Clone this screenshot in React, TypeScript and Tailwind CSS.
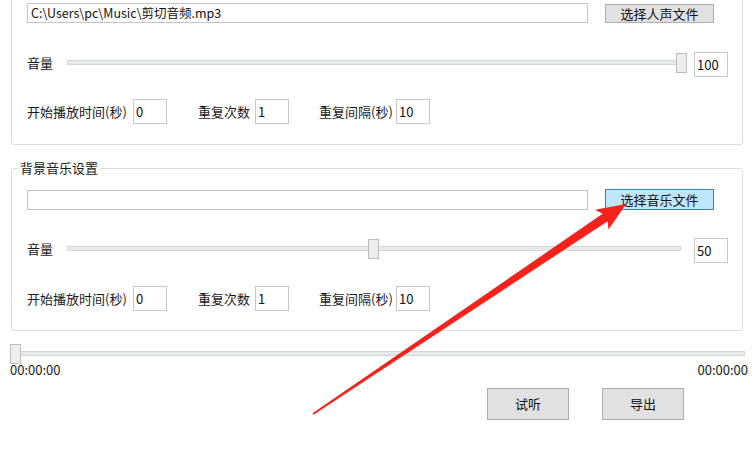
const font = "font-['Noto_Sans_CJK_SC','Noto_Sans',sans-serif]";

const Slider = ({ width, trackRight, thumb }: { width: number; trackRight: number; thumb: number }) => (
  <div className="relative h-[20px]" style={{ width }}>
    <div
      className="absolute top-[7px] left-0 h-[5px] bg-[#e7eaea] border border-[#d6d6d6]"
      style={{ right: trackRight }}
    />
    <div
      className="absolute top-0 w-[11px] h-[20px] bg-[#ededed] border border-[#bcbcbc]"
      style={{ left: thumb }}
    />
  </div>
);

const NumBox = ({ value }: { value: string }) => (
  <div className="w-[34px] h-[25px] border border-[#c8c8c8] bg-white flex items-center pl-[2px] text-[13px] text-[#111]">
    {value}
  </div>
);

const Params = () => (
  <div className="flex items-center h-[25px] pl-[15px] text-[13px] text-[#1a1a1a]">
    <span className="w-[106px] whitespace-nowrap">开始播放时间(秒)</span>
    <NumBox value="0" />
    <span className="ml-[31px] w-[57px] whitespace-nowrap">重复次数</span>
    <NumBox value="1" />
    <span className="ml-[30px] w-[77px] whitespace-nowrap">重复间隔(秒)</span>
    <NumBox value="10" />
  </div>
);

const Group = ({
  title,
  path,
  button,
  active,
  volume,
  thumb,
  className,
}: {
  title?: string;
  path: string;
  button: string;
  active?: boolean;
  volume: string;
  thumb: number;
  className: string;
}) => (
  <div className={`relative mx-[11px] border border-[#dcdcdc] rounded-[3px] ${className}`}>
    {title && (
      <span className="absolute -top-[10px] left-[6px] bg-white px-[2px] text-[13px] leading-[17px] text-[#1a1a1a]">
        {title}
      </span>
    )}
    <div className="flex items-end pl-[15px]">
      <div className="w-[561px] h-[20px] border border-[#c5c5c5] bg-white flex items-center pl-[3px] text-[12.5px] text-[#111] whitespace-nowrap">
        {path}
      </div>
      <button
        className={`ml-[17px] w-[109px] flex items-center justify-center text-[13px] text-[#111] border ${
          active ? "h-[21px] bg-[#bee6fd] border-[#3c7fb1]" : "h-[19px] bg-[#e1e1e1] border-[#adadad]"
        }`}
      >
        {button}
      </button>
    </div>
    <div className={`flex items-start h-[25px] pl-[15px] ${active ? "mt-[28px]" : "mt-[29px]"}`}>
      <span className="w-[40px] mt-[1px] leading-[20px] text-[13px] text-[#1a1a1a]">音量</span>
      <div className="mt-[1px]">
        <Slider width={620} trackRight={6} thumb={thumb} />
      </div>
      <div className="ml-[7px]">
        <NumBox value={volume} />
      </div>
    </div>
    <div className={active ? "mt-[23px]" : "mt-[22px]"}>
      <Params />
    </div>
  </div>
);

export default function App() {
  return (
    <div className={`relative w-[754px] h-[449px] overflow-hidden bg-white ${font}`}>
      <Group
        className="mt-[-24px] pt-[26px] pb-[20px]"
        path="C:\Users\pc\Music\剪切音频.mp3"
        button="选择人声文件"
        volume="100"
        thumb={609}
      />
      <Group
        className="mt-[23px] pt-[20px] pb-[19px]"
        title="背景音乐设置"
        path=""
        button="选择音乐文件"
        active
        volume="50"
        thumb={301}
      />
      <div className="mt-[13px] pl-[10px]">
        <Slider width={735} trackRight={0} thumb={0} />
      </div>
      <div className="flex justify-between pl-[10px] pr-[6px] -mt-[3px] text-[13px] leading-[17px] text-[#1a1a1a]">
        <span>00:00:00</span>
        <span>00:00:00</span>
      </div>
      <div className="flex gap-[33px] pl-[487px] mt-[10px]">
        <button className="w-[82px] h-[32px] bg-[#e1e1e1] border border-[#adadad] text-[13px] text-[#111]">试听</button>
        <button className="w-[82px] h-[32px] bg-[#e1e1e1] border border-[#adadad] text-[13px] text-[#111]">导出</button>
      </div>
      <svg className="absolute inset-0 pointer-events-none" width="754" height="449" viewBox="0 0 754 449">
        <polygon
          points="312.5,413.2 602.6,213.8 595.1,209.8 626,204 608.5,229.6 607.6,221.2 313.5,414.8"
          fill="#f5221b"
        />
      </svg>
    </div>
  );
}
